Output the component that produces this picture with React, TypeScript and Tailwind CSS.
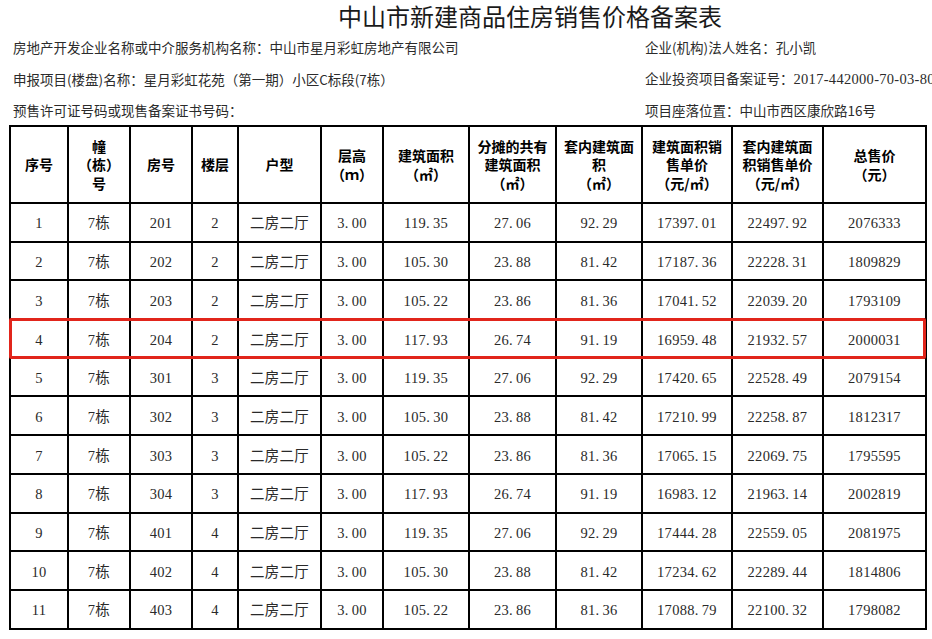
import React from "react";

const headers: string[][] = [
  ["序号"],
  ["幢", "（栋）", "号"],
  ["房号"],
  ["楼层"],
  ["户型"],
  ["层高", "（ｍ）"],
  ["建筑面积", "（㎡）"],
  ["分摊的共有", "建筑面积", "（㎡）"],
  ["套内建筑面", "积", "（㎡）"],
  ["建筑面积销", "售单价", "（元/㎡）"],
  ["套内建筑面", "积销售单价", "（元/㎡）"],
  ["总售价", "（元）"],
];

const rows: string[][] = [
  ["1", "7栋", "201", "2", "二房二厅", "3.00", "119.35", "27.06", "92.29", "17397.01", "22497.92", "2076333"],
  ["2", "7栋", "202", "2", "二房二厅", "3.00", "105.30", "23.88", "81.42", "17187.36", "22228.31", "1809829"],
  ["3", "7栋", "203", "2", "二房二厅", "3.00", "105.22", "23.86", "81.36", "17041.52", "22039.20", "1793109"],
  ["4", "7栋", "204", "2", "二房二厅", "3.00", "117.93", "26.74", "91.19", "16959.48", "21932.57", "2000031"],
  ["5", "7栋", "301", "3", "二房二厅", "3.00", "119.35", "27.06", "92.29", "17420.65", "22528.49", "2079154"],
  ["6", "7栋", "302", "3", "二房二厅", "3.00", "105.30", "23.88", "81.42", "17210.99", "22258.87", "1812317"],
  ["7", "7栋", "303", "3", "二房二厅", "3.00", "105.22", "23.86", "81.36", "17065.15", "22069.75", "1795595"],
  ["8", "7栋", "304", "3", "二房二厅", "3.00", "117.93", "26.74", "91.19", "16983.12", "21963.14", "2002819"],
  ["9", "7栋", "401", "4", "二房二厅", "3.00", "119.35", "27.06", "92.29", "17444.28", "22559.05", "2081975"],
  ["10", "7栋", "402", "4", "二房二厅", "3.00", "105.30", "23.88", "81.42", "17234.62", "22289.44", "1814806"],
  ["11", "7栋", "403", "4", "二房二厅", "3.00", "105.22", "23.86", "81.36", "17088.79", "22100.32", "1798082"],
];

// SimSun style numbers: the dot takes a half-width cell
function Num({ v }: { v: string }) {
  const parts = v.split(".");
  if (parts.length < 2) return <>{v}</>;
  return (
    <>
      {parts[0]}
      <span className="inline-block w-[7px]">.</span>
      {parts[1]}
    </>
  );
}

export default function App() {
  return (
    <div className="w-[932px] h-[639px] overflow-hidden bg-white text-[#222] font-['Noto_Sans_CJK_SC',sans-serif]">
      <div className="h-[31px] pt-[1px] pl-[338px] whitespace-nowrap text-[24px] leading-[30px] text-[#1a1a1a]">
        中山市新建商品住房销售价格备案表
      </div>

      <div className="flex h-[32px] items-center whitespace-nowrap text-[13.5px] text-[#2b2b2b]">
        <div className="w-[645px] shrink-0 pl-[13px]">房地产开发企业名称或中介服务机构名称：中山市星月彩虹房地产有限公司</div>
        <div className="min-w-0 overflow-hidden">企业(机构)法人姓名：孔小凯</div>
      </div>
      <div className="flex h-[32px] items-center whitespace-nowrap text-[13.5px] text-[#2b2b2b]">
        <div className="w-[645px] shrink-0 pl-[13px]">申报项目(楼盘)名称：星月彩虹花苑（第一期）小区C标段(7栋）</div>
        <div className="min-w-0 overflow-hidden">
          企业投资项目备案证号：
          <span className="font-['Liberation_Serif',serif] text-[14.5px] tracking-[0.3px]">2017-442000-70-03-80</span>
        </div>
      </div>
      <div className="flex h-[30px] items-center whitespace-nowrap text-[13.5px] text-[#2b2b2b]">
        <div className="w-[645px] shrink-0 pl-[13px]">预售许可证号码或现售备案证书号码：</div>
        <div className="min-w-0 overflow-hidden">项目座落位置：中山市西区康欣路16号</div>
      </div>

      <div className="relative ml-[9px] w-[918px]">
        <div className="grid grid-cols-[56px_60px_60px_44px_81px_60px_84px_85px_84px_88px_89px_101px] grid-rows-[75px_repeat(11,36.7px)] gap-[2px] bg-black p-[2px]">
          {headers.map((h, i) => (
            <div
              key={"h" + i}
              className="flex flex-col items-center justify-center bg-white text-[14px] font-bold leading-[18.5px] text-black"
            >
              {h.map((line, j) => (
                <span key={j}>{line}</span>
              ))}
            </div>
          ))}
          {rows.map((r, ri) =>
            r.map((c, ci) => (
              <div
                key={ri + "-" + ci}
                className="flex items-center justify-center bg-white pt-[4px] font-['Liberation_Serif','Noto_Sans_CJK_SC',serif] text-[14.5px] tracking-[0.3px] text-[#2a2a2a]"
              >
                <Num v={c} />
              </div>
            ))
          )}
        </div>

        {/* red highlight on row 4 */}
        <div className="absolute left-0 top-[193px] h-[41px] w-[917px] rounded-[2px] border-[3px] border-[#e1251b]" />
      </div>
    </div>
  );
}
